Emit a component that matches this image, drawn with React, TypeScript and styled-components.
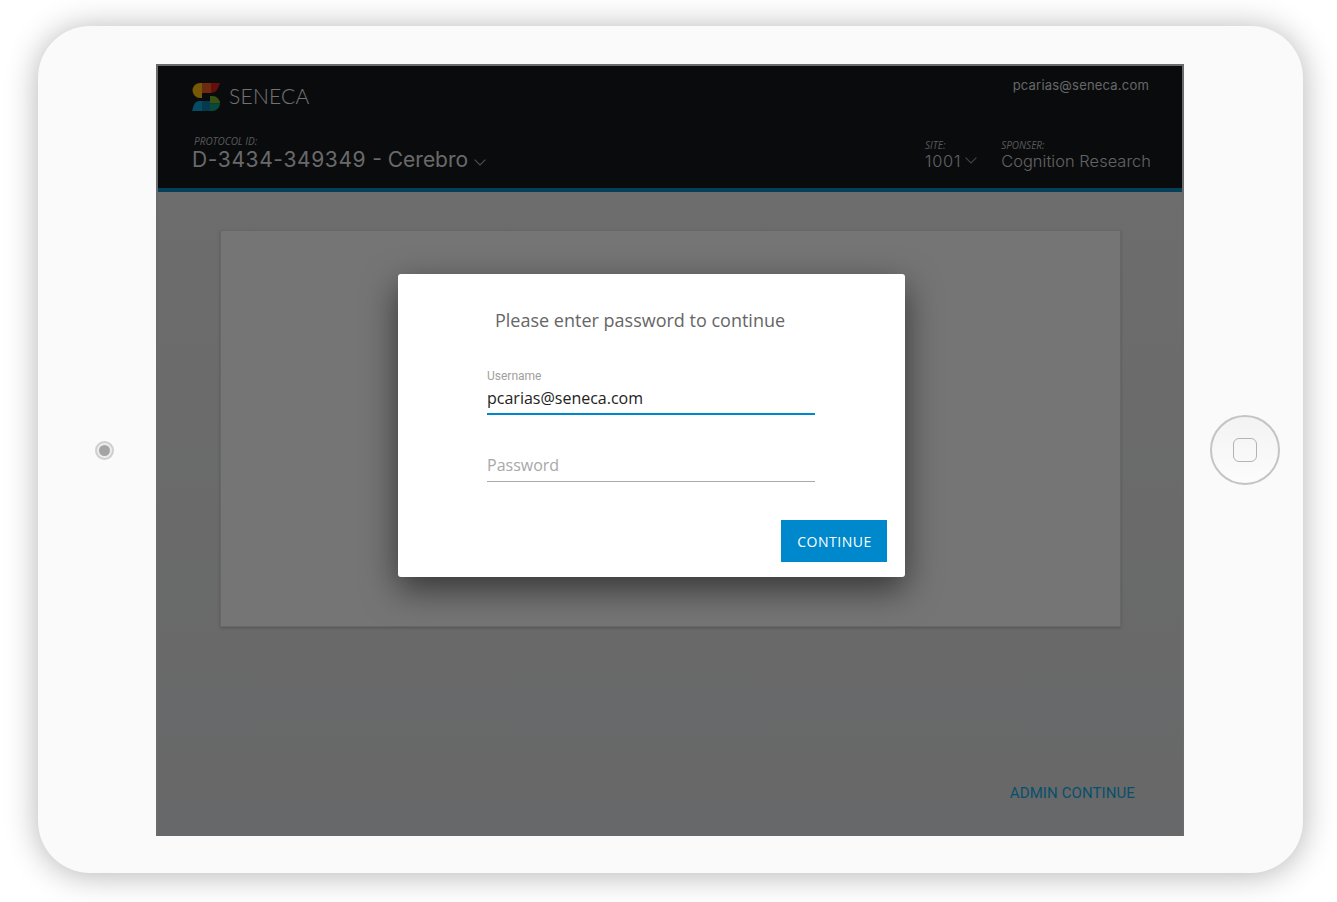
import React from "react";
import styled, { createGlobalStyle } from "styled-components";

const Global = createGlobalStyle`
  html, body { margin: 0; padding: 0; background: #fff; }
  body { font-family: "Open Sans", "Liberation Sans", sans-serif; }
  #root { width: 1337px; height: 902px; overflow: hidden; }
`;

const Page = styled.div`
  width: 1337px;
  height: 902px;
  padding: 26px 34px 29px 38px;
  box-sizing: border-box;
  background: #fff;
`;

const Device = styled.div`
  width: 1265px;
  height: 847px;
  box-sizing: border-box;
  padding: 38px 0 37px;
  display: flex;
  background: #fafafa;
  border-radius: 52px;
  box-shadow: 0 2px 32px rgba(0, 0, 0, 0.3);
`;

const Rail = styled.div<{ $w: number; $shift?: number }>`
  width: ${(p) => p.$w}px;
  flex: none;
  box-sizing: border-box;
  padding-left: ${(p) => p.$shift ?? 0}px;
  display: flex;
  align-items: center;
  justify-content: center;
`;

const Camera = styled.div`
  width: 19px;
  height: 19px;
  box-sizing: border-box;
  border-radius: 50%;
  border: 2px solid #cfcfcf;
  background: #ececec;
  display: flex;
  align-items: center;
  justify-content: center;
  &::after {
    content: "";
    width: 11px;
    height: 11px;
    border-radius: 50%;
    background: #a4a4a4;
  }
`;

const HomeButton = styled.div`
  width: 70px;
  height: 70px;
  box-sizing: border-box;
  border-radius: 50%;
  border: 2px solid #c6c3c3;
  background: linear-gradient(#f3f3f3, #fcfcfc);
  display: flex;
  align-items: center;
  justify-content: center;
`;

const HomeSquare = styled.div`
  width: 24px;
  height: 24px;
  box-sizing: border-box;
  border-radius: 6px;
  border: 1px solid #b5b2b2;
`;

const Screen = styled.div`
  position: relative;
  width: 1028px;
  height: 772px;
  flex: none;
  overflow: hidden;
  box-sizing: border-box;
  border: 2px solid #6b6b6b;
  border-bottom: 0;
  display: flex;
  flex-direction: column;
  background: linear-gradient(#dcdcdc, #cfd0d2);
`;

const Header = styled.header`
  height: 126px;
  flex: none;
  box-sizing: border-box;
  border-bottom: 4px solid #0a7fb0;
  background: #14161a;
  padding: 17px 31px 0 34px;
  display: flex;
  justify-content: space-between;
`;

const HeaderLeft = styled.div`
  display: flex;
  flex-direction: column;
`;

const Brand = styled.div`
  display: flex;
  align-items: center;
  gap: 9px;
  height: 28px;
`;

const BrandName = styled.span`
  font-family: Lato, sans-serif;
  font-weight: 300;
  font-size: 21px;
  line-height: 24px;
  letter-spacing: 0.25px;
  color: #e4e4e4;
  margin-top: -2px;
`;

const SmallLabel = styled.div`
  font-family: "Open Sans", sans-serif;
  font-style: italic;
  font-size: 10px;
  line-height: 12px;
  color: #b0b0b0;
`;

const ProtocolLabel = styled(SmallLabel)`
  margin: 24px 0 0 2px;
`;

const ProtocolRow = styled.div`
  display: flex;
  align-items: center;
  gap: 6px;
  margin-top: 1px;
`;

const ProtocolValue = styled.span`
  font-family: Inter, sans-serif;
  font-size: 21px;
  line-height: 24px;
  color: #d2d2d2;
`;

const ProtocolNumber = styled.span`
  letter-spacing: 0.62px;
`;

const ProtocolChevron = styled.span`
  display: flex;
  margin-top: 5px;
`;

const HeaderRight = styled.div`
  display: flex;
  flex-direction: column;
  align-items: flex-end;
`;

const Email = styled.div`
  font-family: Inter, sans-serif;
  font-size: 13px;
  line-height: 16px;
  letter-spacing: 0.2px;
  color: #cccccc;
  margin: -6px 2px 0 0;
`;

const Meta = styled.div`
  display: flex;
  gap: 24px;
  margin-top: 46px;
`;

const MetaItem = styled.div`
  display: flex;
  flex-direction: column;
`;

const MetaValue = styled.span`
  font-family: Inter, sans-serif;
  font-weight: 300;
  font-size: 16.4px;
  line-height: 20px;
  letter-spacing: 0.05px;
  color: #c4c4c4;
  display: flex;
  align-items: center;
  gap: 4px;
`;

const SiteNumber = styled.span`
  letter-spacing: 0.75px;
`;

const Body = styled.main`
  flex: 1;
  padding: 38px 61px 0 62px;
  position: relative;
`;

const Card = styled.section`
  height: 397px;
  box-sizing: border-box;
  border: 1px solid #cfcfcf;
  background: #ebebeb;
  box-shadow: 0 1px 3px rgba(0, 0, 0, 0.2);
`;

const AdminLink = styled.a`
  position: absolute;
  right: 47px;
  bottom: 34px;
  font-family: Roboto, sans-serif;
  font-size: 15px;
  line-height: 18px;
  letter-spacing: 0.1px;
  color: #0f9fd8;
`;

const Scrim = styled.div`
  position: absolute;
  inset: 0;
  background: rgba(0, 0, 0, 0.5);
`;

const Modal = styled.form`
  position: absolute;
  left: 240px;
  top: 208px;
  width: 507px;
  height: 303px;
  box-sizing: border-box;
  padding: 33px 18px 15px 89px;
  background: #fff;
  border-radius: 3px;
  box-shadow: 0 12px 34px rgba(0, 0, 0, 0.55);
  display: flex;
  flex-direction: column;
`;

const Title = styled.h2`
  margin: 0 0 0 8px;
  font-family: "Open Sans", sans-serif;
  font-weight: 400;
  font-size: 18px;
  line-height: 26px;
  color: #666666;
`;

const Field = styled.div<{ $active?: boolean }>`
  width: 328px;
  box-sizing: border-box;
  display: flex;
  flex-direction: column;
  border-bottom: ${(p) => (p.$active ? "2px solid #0088cc" : "1px solid #aaaaaa")};
`;

const UserField = styled(Field)`
  margin-top: 36px;
  height: 46px;
`;

const PasswordField = styled(Field)`
  margin-top: 39px;
  height: 28px;
`;

const FieldLabel = styled.label`
  font-family: Roboto, sans-serif;
  font-size: 12px;
  line-height: 14px;
  color: #a0a0a0;
`;

const FieldValue = styled.span`
  font-family: "Open Sans", sans-serif;
  font-size: 16px;
  line-height: 22px;
  margin-top: 4px;
  color: #222222;
`;

const Placeholder = styled.span`
  font-family: "Open Sans", sans-serif;
  font-size: 16px;
  line-height: 22px;
  color: #a8a8a8;
`;

const Actions = styled.div`
  margin-top: auto;
  display: flex;
  justify-content: flex-end;
`;

const Continue = styled.button`
  width: 106px;
  height: 42px;
  border: 0;
  padding: 0 0 0 1px;
  background: #0088cc;
  color: #fff;
  font-family: "Open Sans", sans-serif;
  font-size: 14px;
  letter-spacing: 0.5px;
`;

const Chevron = ({ size, color }: { size: number; color: string }) => (
  <svg width={size} height={size * 0.6} viewBox="0 0 10 6" fill="none">
    <path d="M0.5 0.5 L5 5 L9.5 0.5" stroke={color} strokeWidth="0.9" />
  </svg>
);

const Logo = () => (
  <svg width="28" height="28" viewBox="0 0 28 28">
    <path d="M10 0 H8 A7.5 7.5 0 0 0 8 15 H10 Z" fill="#ecb00e" />
    <path d="M10 0 H19 V10 H10 Z" fill="#d9551c" />
    <path d="M19 0 H28 Q26.5 4 25.5 6 Q23.5 10 19 10 Z" fill="#c81c1c" />
    <path d="M10 18 H8 Q3 18 1.5 23 L0 28 H10 Z" fill="#0a96c8" />
    <path d="M10 18 H18 V28 H10 Z" fill="#0b739c" />
    <path d="M18 13 H20.5 A7.5 7.5 0 0 1 28 20.5 H18 Z" fill="#6ea428" />
    <path d="M18 20.5 H28 A7.5 7.5 0 0 1 20.5 28 H18 Z" fill="#12907a" />
  </svg>
);

export default function App() {
  return (
    <Page>
      <Global />
      <Device>
        <Rail $w={118} $shift={14}>
          <Camera />
        </Rail>
        <Screen>
          <Header>
            <HeaderLeft>
              <Brand>
                <Logo />
                <BrandName>SENECA</BrandName>
              </Brand>
              <ProtocolLabel>PROTOCOL ID:</ProtocolLabel>
              <ProtocolRow>
                <ProtocolValue>
                  <ProtocolNumber>D-3434-349349</ProtocolNumber> - Cerebro
                </ProtocolValue>
                <ProtocolChevron>
                  <Chevron size={12} color="#a0a0a0" />
                </ProtocolChevron>
              </ProtocolRow>
            </HeaderLeft>
            <HeaderRight>
              <Email>pcarias@seneca.com</Email>
              <Meta>
                <MetaItem>
                  <SmallLabel>SITE:</SmallLabel>
                  <MetaValue>
                    <SiteNumber>1001</SiteNumber>
                    <Chevron size={12} color="#8a8a8a" />
                  </MetaValue>
                </MetaItem>
                <MetaItem>
                  <SmallLabel>SPONSER:</SmallLabel>
                  <MetaValue>Cognition Research</MetaValue>
                </MetaItem>
              </Meta>
            </HeaderRight>
          </Header>
          <Body>
            <Card />
            <AdminLink>ADMIN CONTINUE</AdminLink>
          </Body>
          <Scrim />
          <Modal>
            <Title>Please enter password to continue</Title>
            <UserField $active>
              <FieldLabel>Username</FieldLabel>
              <FieldValue>pcarias@seneca.com</FieldValue>
            </UserField>
            <PasswordField>
              <Placeholder>Password</Placeholder>
            </PasswordField>
            <Actions>
              <Continue type="button">CONTINUE</Continue>
            </Actions>
          </Modal>
        </Screen>
        <Rail $w={119} $shift={2}>
          <HomeButton>
            <HomeSquare />
          </HomeButton>
        </Rail>
      </Device>
    </Page>
  );
}
